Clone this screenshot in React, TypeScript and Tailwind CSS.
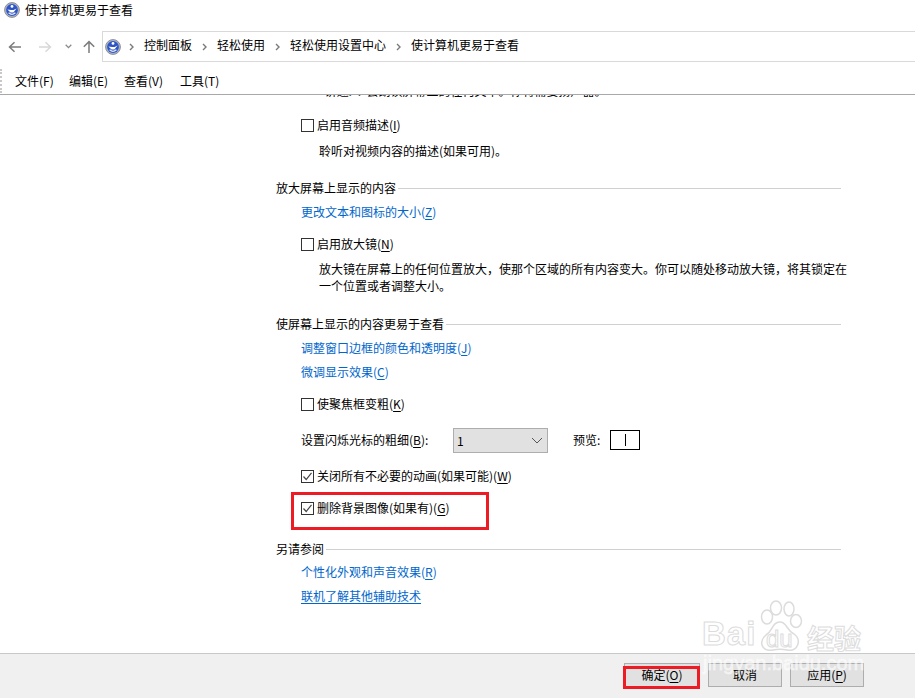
import type { ReactNode } from 'react';

const font = { fontFamily: '"Noto Sans CJK SC", "Liberation Sans", sans-serif' };
const latin = { fontFamily: '"Liberation Sans", sans-serif' };

function EaseIcon({ size }: { size: number }) {
    return (
        <svg width={size} height={size} viewBox="0 0 16 16" className="shrink-0">
            <circle cx="8" cy="8" r="7.4" fill="#a9b4cf" stroke="#8f8f8f" />
            <circle cx="8" cy="8" r="5.9" fill="#2f55c4" />
            <circle cx="8" cy="4.4" r="1.4" fill="#fff" />
            <path d="M3.4 7.6 L6.6 10.4 L9.4 10.4 L12.6 6.4 L9.6 8 L7 8 Z" fill="#fff" />
            <path d="M4.6 10.8 Q8 13.8 11.4 10.8" stroke="#e6edff" strokeWidth="1.2" fill="none" />
        </svg>
    );
}

function Crumb({ children }: { children: ReactNode }) {
    return (
        <>
            <svg width="5" height="8" viewBox="0 0 5 8" className="mx-[4px]">
                <path d="M1 1 L4 4 L1 7" stroke="#7a7a7a" strokeWidth="1.4" fill="none" />
            </svg>
            <span className="mx-[6px] -translate-y-[2px]">{children}</span>
        </>
    );
}

function Key({ children }: { children: ReactNode }) {
    return <span className="underline underline-offset-2">{children}</span>;
}

function Check({ checked }: { checked?: boolean }) {
    return (
        <span className="w-[13px] h-[13px] border border-[#333333] bg-white shrink-0 mr-[3px] flex items-center justify-center">
            {checked && (
                <svg width="11" height="11" viewBox="0 0 11 11">
                    <path d="M1.5 5.5 L4.2 8.5 L9.5 1.8" stroke="#444444" strokeWidth="1.2" fill="none" />
                </svg>
            )}
        </span>
    );
}

function Heading({ title, className }: { title: string; className: string }) {
    return (
        <div className={`h-4 flex items-center gap-[2px] ${className}`}>
            <span>{title}</span>
            <span className="flex-1 h-px bg-[#d0d0d0]" />
        </div>
    );
}

export default function App() {
    return (
        <div style={font} className="w-[915px] h-[698px] bg-white text-black text-[12px] leading-4 flex flex-col overflow-hidden relative">
            {/* title bar */}
            <div className="h-[31px] pl-[4px] pb-[11px] flex items-center shrink-0">
                <EaseIcon size={16} />
                <span className="ml-[5px]">使计算机更易于查看</span>
            </div>

            {/* address row */}
            <div className="h-[31px] flex items-center shrink-0">
                <div className="w-[102px] flex items-center pl-[8px]">
                    <svg width="14" height="12" viewBox="0 0 14 12">
                        <path d="M13 6 H2 M6.5 1.2 L1.5 6 L6.5 10.8" stroke="#7c7c7c" strokeWidth="1.5" fill="none" />
                    </svg>
                    <svg width="14" height="12" viewBox="0 0 14 12" className="ml-[16px]">
                        <path d="M1 6 H12 M7.5 1.2 L12.5 6 L7.5 10.8" stroke="#d8d8d8" strokeWidth="1.5" fill="none" />
                    </svg>
                    <svg width="7" height="5" viewBox="0 0 7 5" className="ml-[13px]">
                        <path d="M0.7 0.8 L3.5 3.6 L6.3 0.8" stroke="#8a8a8a" strokeWidth="1.3" fill="none" />
                    </svg>
                    <svg width="14" height="14" viewBox="0 0 14 14" className="ml-[10px]">
                        <path d="M7 13 V2 M1.8 6.8 L7 1.6 L12.2 6.8" stroke="#7c7c7c" strokeWidth="1.5" fill="none" />
                    </svg>
                </div>
                <div className="flex-1 h-[31px] border-y border-l border-[#d9d9d9] flex items-center pl-[2px]">
                    <EaseIcon size={16} />
                    <span className="ml-[4px] flex items-center">
                        <Crumb>控制面板</Crumb>
                        <Crumb>轻松使用</Crumb>
                        <Crumb>轻松使用设置中心</Crumb>
                        <Crumb>使计算机更易于查看</Crumb>
                    </span>
                </div>
            </div>

            {/* menu */}
            <div className="h-[33px] shrink-0 border-b border-[#a8a8a8] flex items-center pt-[5px] relative z-10 bg-white">
                <span className="w-[2px] h-[24px] border-l-2 border-dotted border-[#c8c8c8] mr-[13px]" />
                <span className="w-[54px]">文件(F)</span>
                <span className="w-[55px]">编辑(E)</span>
                <span className="w-[56px]">查看(V)</span>
                <span>工具(T)</span>
            </div>

            {/* settings list */}
            <div className="flex-1 pl-[276px] pr-[74px] relative">
                <div className="h-4 -mt-[12px] ml-[43px] whitespace-nowrap">"讲述人"会朗读屏幕上的任何文本。你将需要扬声器。</div>
                <div className="h-4 mt-[18px] ml-[25px] flex items-center">
                    <Check />
                    <span>启用音频描述(<Key>I</Key>)</span>
                </div>
                <div className="h-4 mt-[10px] ml-[43px]">聆听对视频内容的描述(如果可用)。</div>

                <Heading title="放大屏幕上显示的内容" className="mt-[21px]" />
                <div className="h-4 mt-[8px] ml-[25px] text-[#0066cc]">更改文本和图标的大小(<Key>Z</Key>)</div>
                <div className="h-4 mt-[16px] ml-[25px] flex items-center">
                    <Check />
                    <span>启用放大镜(<Key>N</Key>)</span>
                </div>
                <div className="h-4 mt-[9px] ml-[43px] whitespace-nowrap">放大镜在屏幕上的任何位置放大，使那个区域的所有内容变大。你可以随处移动放大镜，将其锁定在</div>
                <div className="h-4 mt-px ml-[43px]">一个位置或者调整大小。</div>

                <Heading title="使屏幕上显示的内容更易于查看" className="mt-[22px]" />
                <div className="h-4 mt-[8px] ml-[25px] text-[#0066cc]">调整窗口边框的颜色和透明度(<Key>J</Key>)</div>
                <div className="h-4 mt-[8px] ml-[25px] text-[#0066cc]">微调显示效果(<Key>C</Key>)</div>
                <div className="h-4 mt-[16px] ml-[25px] flex items-center">
                    <Check />
                    <span>使聚焦框变粗(<Key>K</Key>)</span>
                </div>
                <div className="h-4 mt-[20px] ml-[25px] flex items-center relative">
                    <span>设置闪烁光标的粗细(<Key>B</Key>):</span>
                    <div className="absolute left-[152px] -top-[4px] w-[95px] h-[25px] bg-[#e1e1e1] border border-[#adadad] flex items-center justify-between pl-[3px] pr-[4px]">
                        <span>1</span>
                        <svg width="12" height="7" viewBox="0 0 12 7">
                            <path d="M1 1 L6 6 L11 1" stroke="#555555" strokeWidth="1" fill="none" />
                        </svg>
                    </div>
                    <span className="absolute left-[272px] top-0">预览:</span>
                    <div className="absolute left-[309px] -top-[2px] w-[30px] h-[20px] border border-black flex items-center justify-center">
                        <span className="w-px h-[12px] bg-black" />
                    </div>
                </div>
                <div className="h-4 mt-[20px] ml-[25px] flex items-center">
                    <Check checked />
                    <span>关闭所有不必要的动画(如果可能)(<Key>W</Key>)</span>
                </div>
                <div className="h-4 mt-[16px] ml-[25px] flex items-center relative">
                    <Check checked />
                    <span>删除背景图像(如果有)(<Key>G</Key>)</span>
                    <span className="absolute -left-[10px] -top-[8px] w-[198px] h-[38px] border-[3px] border-[#ed1c24]" />
                </div>

                <Heading title="另请参阅" className="mt-[25px]" />
                <div className="h-4 mt-[7px] ml-[25px] text-[#0066cc]">个性化外观和声音效果(<Key>R</Key>)</div>
                <div className="h-4 mt-[8px] ml-[25px] text-[#0066cc] underline underline-offset-2">联机了解其他辅助技术</div>
            </div>

            {/* footer buttons */}
            <div className="h-[45px] shrink-0 bg-[#f0f0f0] border-t border-[#c8c8c8] flex justify-end items-start pt-[9px] pr-[51px] gap-[8px]">
                <div className="relative w-[76px] h-[24px] bg-[#e1e1e1] border border-[#adadad] flex items-center justify-center">
                    确定(<Key>O</Key>)
                    <span className="absolute -left-[2px] top-[2px] w-[77px] h-[23px] border-[3px] border-[#ed1c24]" />
                </div>
                <div className="w-[74px] h-[24px] bg-[#e1e1e1] border border-[#adadad] flex items-center justify-center">取消</div>
                <div className="w-[74px] h-[24px] bg-[#e1e1e1] border border-[#adadad] flex items-center justify-center">应用(<Key>P</Key>)</div>
            </div>

            {/* watermark */}
            <div className="absolute left-[700px] top-[600px] w-[215px] h-[98px] text-white/75 [-webkit-text-stroke:1px_#dcdcdc] pointer-events-none">
                <svg width="48" height="54" viewBox="0 0 48 54" className="absolute left-[56px] top-0">
                    <g fill="#ffffff" fillOpacity="0.6" stroke="#dcdcdc" strokeWidth="1.5">
                        <ellipse cx="11" cy="17" rx="5.5" ry="7" />
                        <ellipse cx="20" cy="8" rx="5.5" ry="7" />
                        <ellipse cx="33" cy="9" rx="5" ry="7" />
                        <ellipse cx="40" cy="21" rx="5.5" ry="6.5" />
                        <path d="M24 22 C31 22 30 30 38 34 C46 40 42 52 31 50 C26 49 22 49 17 50 C6 52 2 42 10 35 C17 31 16 22 24 22 Z" />
                    </g>
                </svg>
                <span style={latin} className="absolute left-[2px] top-[16px] text-[33px] leading-[36px] font-bold tracking-[1px]">Bai</span>
                <span style={latin} className="absolute left-[66px] top-[27px] text-[24px] leading-[24px]">du</span>
                <span className="absolute left-[107px] top-[22px] text-[27px] leading-[32px] font-bold">经验</span>
                <span style={latin} className="absolute left-[3px] top-[51px] text-[20px] leading-[24px] whitespace-nowrap text-white/50 [-webkit-text-stroke:1px_#ffffff60]">jingyan.baidu.com</span>
            </div>
        </div>
    );
}
